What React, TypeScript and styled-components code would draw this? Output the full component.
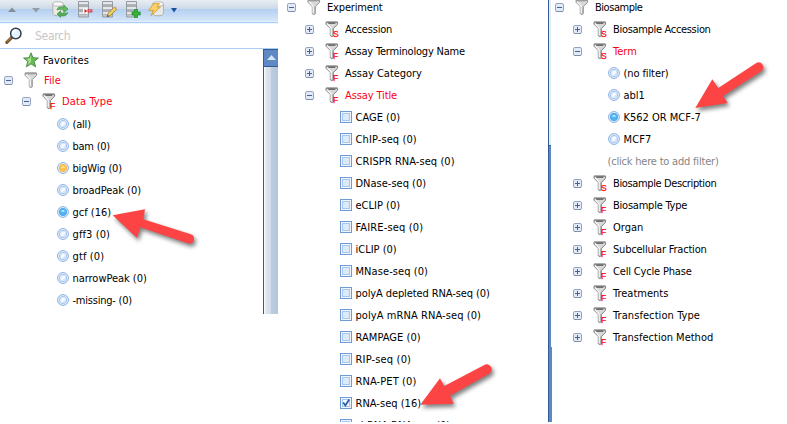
import React from "react";
import styled, { createGlobalStyle, css } from "styled-components";

const GlobalStyle = createGlobalStyle`
  body { margin: 0; background: #fff; overflow: hidden; }
  svg { display: block; }
`;

const Page = styled.main`
  position: relative;
  display: flex;
  align-items: flex-start;
  width: 787px;
  height: 424px;
  overflow: hidden;
  background: #fff;
  color: #000;
  font: 11px "DejaVu Sans Condensed", "DejaVu Sans", sans-serif;
`;

const FilePanel = styled.section`
  flex: none;
  width: 278px;
  height: 314px;
  display: flex;
  flex-direction: column;
`;

const Toolbar = styled.div`
  box-sizing: border-box;
  flex: none;
  height: 24px;
  padding: 1px 0 0 8px;
  display: grid;
  grid-template-columns: 24px 20px 25px 24px 24px 23px 23px 8px;
  align-items: start;
  background: linear-gradient(#e9edf2 0, #ccd9e7 9px, #b3cff0 9px, #d5e6fa 21px, #eef6ff 22px, #a8cdf6 22px, #a8cdf6 23px, #edf5fe 23px);
`;

const SearchBar = styled.div`
  box-sizing: border-box;
  flex: none;
  height: 25px;
  padding-left: 5px;
  display: flex;
  align-items: center;
  gap: 12px;
  border-bottom: 1px solid #a8cdf6;
`;

const SearchField = styled.span`
  color: #c6c6c6;
  font-size: 12px;
  letter-spacing: -0.3px;
`;

const PanelBody = styled.div`
  flex: 1;
  min-height: 0;
  display: flex;
`;

const FileTree = styled.div`
  flex: 1;
`;

const Scrollbar = styled.div`
  box-sizing: border-box;
  width: 15px;
  display: flex;
  flex-direction: column;
  border-left: 1px solid #325a94;
  background: linear-gradient(90deg, #f4f7fb 1px, #dce4ee 2px, #d2dce8 7px, #bccddf 7px, #b3c5dc);
`;

const ScrollUp = styled.div`
  box-sizing: border-box;
  height: 18px;
  padding: 5px 0 0 3px;
  border-top: 1px solid #325a94;
  border-bottom: 1px solid #325a94;
  background: #5e89c5;
`;

const ExperimentPanel = styled.section`
  flex: none;
  box-sizing: border-box;
  width: 270px;
  height: 422px;
  padding-left: 7px;
  overflow: hidden;
`;

const TreeShift = styled.div`
  margin-top: -4px;
`;

const BiosamplePanel = styled.section`
  flex: none;
  width: 239px;
  height: 422px;
  display: flex;
  overflow: hidden;
`;

const Divider = styled.div`
  width: 4px;
  margin-right: 1px;
  background:
    linear-gradient(90deg, #325a94 1px, transparent 1px),
    linear-gradient(#e6edf6 0 145px, #325a94 145px 146px, #5c88c6 146px) 0 0 / 3px 100% no-repeat,
    linear-gradient(transparent 347px, #5c88c6 347px);
`;

const Row = styled.div<{ $height?: number }>`
  height: ${(p) => p.$height ?? 22}px;
  display: flex;
  align-items: center;
`;

const ToggleSlot = styled.span<{ $depth: number }>`
  flex: none;
  width: 22px;
  margin-left: ${(p) => p.$depth * 18}px;
  padding: 1px 0 0 2px;
  box-sizing: border-box;
`;

const FunnelSlot = styled.span`
  flex: none;
  box-sizing: border-box;
  width: 20px;
`;

const ChoiceSlot = styled.span<{ $indent: number }>`
  flex: none;
  width: 12px;
  margin-left: ${(p) => p.$indent}px;
  margin-right: 3.5px;
`;

const Label = styled.span<{ $track?: number; $tone?: "red" | "hint" }>`
  white-space: nowrap;
  line-height: 14px;
  padding-top: 2px;
  letter-spacing: ${(p) => p.$track ?? 0}px;
  ${(p) => p.$tone === "red" && css`color: #fb0012;`}
  ${(p) => p.$tone === "hint" && css`color: #858585;`}
`;

const StarSlot = styled.span`
  flex: none;
  width: 16px;
  margin: 0 4px 0 23px;
`;

const HintSlot = styled.span`
  width: 54.5px;
`;

const ArrowMark = styled.svg<{ $x: number; $y: number }>`
  position: absolute;
  left: ${(p) => p.$x}px;
  top: ${(p) => p.$y}px;
  filter: drop-shadow(2px 3px 2px rgba(0, 0, 0, 0.5));
  overflow: visible;
`;

const Toggle = ({ open }: { open?: boolean }) => (
  <svg width="9" height="9" viewBox="0 0 9 9">
    <rect x=".5" y=".5" width="8" height="8" rx="1.3" fill="#e3eaf7" stroke="#94a3c0" />
    <path d="M1 8.5h7" stroke="#7f8fae" />
    <path d={open ? "M2 4.5h5" : "M2 4.5h5M4.5 2v5"} stroke="#4a608f" />
  </svg>
);

const Funnel = ({ mark }: { mark?: string }) => (
  <svg width="18" height="18" viewBox="0 0 18 18">
    <path d="M1 2.2h11.6v2L8.3 8.6v7.1l-1.5 1-1.5-1V8.6L1 4.2z" fill="#d9d9d9" stroke={mark ? "#7c7c7c" : "#929292"} />
    <path d="M2.3 4l3.8 4v7" fill="none" stroke="#f7f7f7" strokeWidth="1.2" />
    <path d="M7.7 8.5v7" stroke="#aaa" strokeWidth=".8" />
    <path d="M1.3 2h11" stroke="#888" />
    <path d="M3.3 3.2h7" stroke={mark ? "#555" : "#aaa"} strokeWidth={mark ? 1.2 : 0.8} />
    {mark && (
      <text x="8" y="17" fill="#ff0808" stroke="#ff0808" strokeWidth=".25" fontFamily="Liberation Sans" fontSize="8.5">
        {mark}
      </text>
    )}
  </svg>
);

const radioColors = {
  off: ["#dceafb", "#a3c1ec", "#f4f9ff"],
  hot: ["#ffc24c", "#f3b748", "#ffe4a4"],
  on: ["#4db5f4", "#4ba3e8", "#c6f0ff"],
};

const Radio = ({ state = "off" }: { state?: keyof typeof radioColors }) => {
  const [fill, ring, shine] = radioColors[state];
  return (
    <svg width="12" height="12" viewBox="0 0 12 12">
      <circle cx="6" cy="6" r="5.4" fill="#edf5ff" stroke="#86addf" />
      <circle cx="6" cy="6" r="3.7" fill={fill} stroke={ring} strokeWidth=".9" />
      <path d="M4 5.2Q6 3 8 5.2Q6 6.2 4 5.2" fill={shine} />
      {state === "off" && <path d="M4.3 7.8l3.5-3.5" stroke="#fff" strokeWidth="1.5" />}
    </svg>
  );
};

const Checkbox = ({ checked }: { checked?: boolean }) => (
  <svg width="12" height="12" viewBox="0 0 12 12">
    <rect x=".5" y=".5" width="11" height="11" fill="#eef5fe" stroke="#6f9cd6" />
    <rect x="2.5" y="2.5" width="7" height="7" fill={checked ? "#f8fbff" : "#dce9f9"} stroke="#a9c7ec" />
    {checked && <path d="M3.2 5.5l2.2 3 3.8-6" fill="none" stroke="#265f9f" strokeWidth="1.8" />}
  </svg>
);

const Star = () => (
  <svg width="16" height="16" viewBox="0 0 16 16">
    <path d="M8 .8l2 5 5.4.2-4.2 3.5 1.5 5.4L8 11.8l-4.7 3.1 1.5-5.4L.6 6 6 5.8z" fill="#64bd50" stroke="#4b8746" strokeWidth=".9" />
    <path d="M8 3v7l-3.4 3 1.1-4L3 7l3.7-.4z" fill="#a9e090" />
  </svg>
);

const Triangle = ({ down, color = "#858d97", size = 8 }: { down?: boolean; color?: string; size?: number }) => (
  <svg width={size} height="17" viewBox={`0 0 ${size} 17`}>
    <path d={down ? `M0 7h${size}l${-size / 2} 4.6z` : `M0 11h${size}l${-size / 2}-4.6z`} fill={color} />
  </svg>
);

const Drum = () => (
  <>
    <path d="M.8 3v9.5c0 3 10.6 3 10.6 0V3" fill="#e9e9e6" stroke="#b1b1ad" />
    <ellipse cx="6.1" cy="3" rx="5.3" ry="2.2" fill="#fafafa" stroke="#b9b9b5" />
  </>
);

const RefreshIcon = () => (
  <svg width="17" height="17" viewBox="0 0 17 17">
    <Drum />
    <path d="M5 9c.4-3 4-4 7-2.7V4.2l4 3.8-4 3.4V9.3C10 8 7.5 8 5 9z" fill="#62b95f" stroke="#2f8938" strokeWidth=".6" />
    <path d="M15.7 11.7c-1 3-4 4-7 2.8v2L5 13l3.7-3.3v2c2 1 4.7 1 7 0z" fill="#55ad55" stroke="#2f8938" strokeWidth=".6" />
  </svg>
);

const RackIcon = ({ badge }: { badge: "minus" | "edit" | "plus" }) => (
  <svg width="17" height="17" viewBox="0 0 17 17">
    <path d="M1.5.5h10v15.5h-10z" fill="#c6cacf" stroke="#969ba2" />
    <path d="M2 2h9M2 7h9M2 12h9" stroke="#eef0f2" strokeWidth="1.6" />
    <path d="M1.5 5h10M1.5 10h10" stroke="#8b9198" />
    <path d="M2 3.7h9M2 8.7h9M2 13.7h9" stroke="#adb2b9" />
    {badge === "minus" && (
      <>
        <path d="M6 7.6h3v-1l3 3.5-3 3.2v-1.2H6z" fill="#fff" />
        <path d="M7.5 8l2.8 2-2.8 2z" fill="#c5222e" />
        <path d="M10.5 8.4h4.8v3h-4.8z" fill="#d9222e" />
        <path d="M11.5 9.9h3" stroke="#ffc0c0" />
      </>
    )}
    {badge === "edit" && (
      <>
        <path d="M6.2 15.7l1-3.5 6-6 2.3 2.1-6 6.2z" fill="#efd05f" stroke="#8b722f" strokeWidth=".7" />
        <path d="M13.1 6.2l1-1 2.2 2-1 1.1z" fill="#e3a3a2" />
        <path d="M6.2 15.7l.5-1.7 1.4 1.2z" fill="#333" />
      </>
    )}
    {badge === "plus" && <path d="M9.5 8.5h3V11h2.7v3h-2.7v2.5h-3V14H7v-3h2.5z" fill="#35b536" stroke="#168621" strokeWidth=".7" />}
  </svg>
);

const BoltIcon = () => (
  <svg width="17" height="17" viewBox="0 0 17 17">
    <g transform="translate(4 0)"><Drum /></g>
    <path d="M5.5 2.6h6L9 6h3.5L3 14.6l2.4-5.2H.8z" fill="#f8d16a" stroke="#d49720" strokeWidth=".8" />
  </svg>
);

const SearchIcon = () => (
  <svg width="18" height="18" viewBox="0 0 18 18">
    <path d="M1.8 15.4l5-5" stroke="#755026" strokeWidth="3" strokeLinecap="round" />
    <path d="M2 14.7l4.5-4.5" stroke="#bd9357" strokeWidth="1" />
    <circle cx="10.8" cy="6.5" r="5.2" fill="#e5f3ff" stroke="#363d49" strokeWidth="1.5" />
    <path d="M7.8 6a3 3 0 0 1 3-2.8" fill="none" stroke="#fff" strokeWidth="1.5" />
  </svg>
);

type NodeProps = { depth?: number; open?: boolean; mark?: string; red?: boolean; track?: number; height?: number; children: string };

const TreeNode = ({ depth = 0, open, mark, red, track, height, children }: NodeProps) => (
  <Row $height={height}>
    <ToggleSlot $depth={depth}><Toggle open={open} /></ToggleSlot>
    <FunnelSlot><Funnel mark={mark} /></FunnelSlot>
    <Label $track={track} $tone={red ? "red" : undefined}>{children}</Label>
  </Row>
);

type Entry = [label: string, track: number, state?: "on" | "hot"];

const dataTypes: Entry[] = [
  ["(all)", -0.2], ["bam (0)", -0.25], ["bigWig (0)", -0.16, "hot"], ["broadPeak (0)", -0.05],
  ["gcf (16)", 0, "on"], ["gff3 (0)", 0.1], ["gtf (0)", 0.12], ["narrowPeak (0)", -0.04], ["-missing- (0)", -0.22],
];

const assays: Entry[] = [
  ["CAGE (0)", 0], ["ChIP-seq (0)", 0.1], ["CRISPR RNA-seq (0)", 0.06], ["DNase-seq (0)", 0],
  ["eCLIP (0)", 0], ["FAIRE-seq (0)", 0.15], ["iCLIP (0)", 0], ["MNase-seq (0)", 0.08],
  ["polyA depleted RNA-seq (0)", -0.1], ["polyA mRNA RNA-seq (0)", 0.08], ["RAMPAGE (0)", 0.05],
  ["RIP-seq (0)", 0.17], ["RNA-PET (0)", 0.1], ["RNA-seq (16)", 0.02, "on"], ["shRNA RNA-seq (0)", 0],
];

const terms: Entry[] = [["(no filter)", -0.1], ["abl1", 0], ["K562 OR MCF-7", 0, "on"], ["MCF7", 0.1]];

const sampleFields: [string, string, number][] = [
  ["Biosample Description", "S", -0.37], ["Biosample Type", "F", -0.23], ["Organ", "F", 0],
  ["Subcellular Fraction", "F", -0.2], ["Cell Cycle Phase", "F", -0.17], ["Treatments", "F", 0],
  ["Transfection Type", "F", 0.08], ["Transfection Method", "F", 0],
];

const RadioList = ({ items, indent }: { items: Entry[]; indent: number }) => (
  <>
    {items.map(([label, track, state]) => (
      <Row key={label}>
        <ChoiceSlot $indent={indent}><Radio state={state} /></ChoiceSlot>
        <Label $track={track}>{label}</Label>
      </Row>
    ))}
  </>
);

const Arrow = ({ x, y, w, h, path }: { x: number; y: number; w: number; h: number; path: string }) => (
  <ArrowMark $x={x} $y={y} width={w} height={h} viewBox={`0 0 ${w} ${h}`}>
    <path d={path} fill="#fc4444" />
  </ArrowMark>
);

export default function App() {
  return (
    <>
      <GlobalStyle />
      <Page>
        <FilePanel>
          <Toolbar>
            <Triangle />
            <Triangle down color="#959ca5" />
            <RefreshIcon />
            <RackIcon badge="minus" />
            <RackIcon badge="edit" />
            <RackIcon badge="plus" />
            <BoltIcon />
            <Triangle down color="#17539c" size={6} />
          </Toolbar>
          <SearchBar>
            <SearchIcon />
            <SearchField>Search</SearchField>
          </SearchBar>
          <PanelBody>
            <FileTree>
              <Row>
                <StarSlot><Star /></StarSlot>
                <Label $track={0.15}>Favorites</Label>
              </Row>
              <TreeNode height={18} depth={0.111} open red track={0.1}>File</TreeNode>
              <TreeNode height={24} depth={1.111} open red mark="F" track={0.13}>Data Type</TreeNode>
              <RadioList items={dataTypes} indent={57} />
            </FileTree>
            <Scrollbar>
              <ScrollUp>
                <svg width="9" height="5" viewBox="0 0 9 5"><path d="M0 5l4.5-5L9 5z" fill="#d5e4f7" /></svg>
              </ScrollUp>
            </Scrollbar>
          </PanelBody>
        </FilePanel>

        <ExperimentPanel>
          <TreeShift>
            <TreeNode open track={-0.17}>Experiment</TreeNode>
            <TreeNode depth={1} mark="S" track={-0.2}>Accession</TreeNode>
            <TreeNode depth={1} mark="F" track={-0.2}>Assay Terminology Name</TreeNode>
            <TreeNode depth={1} mark="F" track={-0.03}>Assay Category</TreeNode>
            <TreeNode depth={1} mark="F" open red track={-0.12}>Assay Title</TreeNode>
            {assays.map(([label, track, state]) => (
              <Row key={label}>
                <ChoiceSlot $indent={55}><Checkbox checked={state === "on"} /></ChoiceSlot>
                <Label $track={track}>{label}</Label>
              </Row>
            ))}
          </TreeShift>
        </ExperimentPanel>

        <BiosamplePanel>
          <Divider />
          <TreeShift>
            <TreeNode open track={-0.46}>Biosample</TreeNode>
            <TreeNode depth={1} mark="S" track={-0.32}>Biosample Accession</TreeNode>
            <TreeNode depth={1} mark="S" open red>Term</TreeNode>
            <RadioList items={terms} indent={55} />
            <Row>
              <HintSlot />
              <Label $tone="hint" $track={-0.2}>(click here to add filter)</Label>
            </Row>
            {sampleFields.map(([label, mark, track]) => (
              <TreeNode key={label} depth={1} mark={mark} track={track}>{label}</TreeNode>
            ))}
          </TreeShift>
        </BiosamplePanel>

        <Arrow x={112} y={209} w={83} h={35} path="M.7 6.3L33 .3l-1.7 10L78.9 25.2a4.8 4.8 0 0 1-2.6 9.2L28.3 18.3 25 29z" />
        <Arrow x={420} y={364} w={73} h={42} path="M.3 40.7L20 14.3l4.3 7.7L64.3 .9a5 5 0 0 1 4.8 8.8L30 31.7l3.7 8z" />
        <Arrow x={695} y={62} w={70} h={47} path="M.3 46L17.3 17.3l6 8.7L61.3 .9a4.8 4.8 0 0 1 5.2 8L28 34l4.7 7z" />
      </Page>
    </>
  );
}
